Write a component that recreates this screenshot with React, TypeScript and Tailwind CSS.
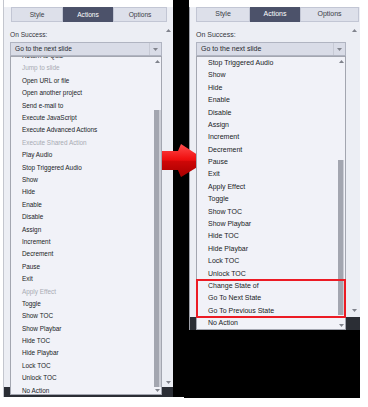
const leftItems: [string, boolean][] = [
  ['Return to Quiz', false],
  ['Jump to slide', true],
  ['Open URL or file', false],
  ['Open another project', false],
  ['Send e-mail to', false],
  ['Execute JavaScript', false],
  ['Execute Advanced Actions', false],
  ['Execute Shared Action', true],
  ['Play Audio', false],
  ['Stop Triggered Audio', false],
  ['Show', false],
  ['Hide', false],
  ['Enable', false],
  ['Disable', false],
  ['Assign', false],
  ['Increment', false],
  ['Decrement', false],
  ['Pause', false],
  ['Exit', false],
  ['Apply Effect', true],
  ['Toggle', false],
  ['Show TOC', false],
  ['Show Playbar', false],
  ['Hide TOC', false],
  ['Hide Playbar', false],
  ['Lock TOC', false],
  ['Unlock TOC', false],
  ['No Action', false],
]

const rightItems = [
  'Stop Triggered Audio',
  'Show',
  'Hide',
  'Enable',
  'Disable',
  'Assign',
  'Increment',
  'Decrement',
  'Pause',
  'Exit',
  'Apply Effect',
  'Toggle',
  'Show TOC',
  'Show Playbar',
  'Hide TOC',
  'Hide Playbar',
  'Lock TOC',
  'Unlock TOC',
  'Change State of',
  'Go To Next State',
  'Go To Previous State',
  'No Action',
]

function Tri({ up = false }: { up?: boolean }) {
  return (
    <svg width="5" height="3" viewBox="0 0 5 3" className="shrink-0">
      <path d={up ? 'M0 3 L2.5 0 L5 3 Z' : 'M0 0 L5 0 L2.5 3 Z'} fill="#80838c" />
    </svg>
  )
}

function Tabs({ widths, size }: { widths: number[]; size: string }) {
  const names = ['Style', 'Actions', 'Options']
  return (
    <div className="flex h-[15px]">
      {names.map((n, i) => (
        <div
          key={n}
          style={{ width: widths[i] }}
          className={
            i === 1
              ? `flex items-center justify-center bg-[#4c526a] text-white border border-[#4c526a] ${size}`
              : `flex items-center justify-center bg-[#dde0ea] text-[#3a3d46] border border-[#c2c6d4] ${size}`
          }
        >
          {n}
        </div>
      ))}
    </div>
  )
}

function Dropdown({ size }: { size: string }) {
  return (
    <div className={`mt-[2px] flex h-[14px] items-center justify-between border border-[#b0b4c1] bg-[#d9dce7] pl-[4px] pr-[3px] text-[#26282e] ${size}`}>
      <span>Go to the next slide</span>
      <div className="flex h-full items-center border-l border-[#c7cad5] pl-[3px]">
        <Tri />
      </div>
    </div>
  )
}

export default function App() {
  return (
    <div className="relative h-[407px] w-[368px] overflow-hidden bg-white font-['Liberation_Sans',Arial,sans-serif]">
      <div className="flex items-start">
        {/* left capture */}
        <div className="ml-[3px] flex h-[397px] w-[170px] flex-col border-l border-[#c3c6ce]">
          <div className="h-[7px] bg-white" />
          <div className="relative flex flex-1 flex-col bg-[#eceef4]">
            <div className="absolute inset-x-0 bottom-0 h-[10px] bg-[#2b2e35]" />
            <div className="ml-[7px]">
              <Tabs widths={[52, 50, 54]} size="text-[6.6px]" />
            </div>
            <div className="flex flex-1">
              <div className="relative z-10 ml-[6px] flex w-[152px] flex-col">
                <div className="mt-[8px] h-[10px] text-[6.6px] leading-[10px] text-[#33363d]">On Success:</div>
                <Dropdown size="text-[6.6px]" />
                <div className="flex h-[339px] border border-[#a3a6b0] bg-[#f1f2f8]">
                  <div className="flex-1 overflow-hidden">
                    <div className="mt-[-7.3px]">
                      {leftItems.map(([t, off]) => (
                        <div
                          key={t}
                          className={`flex h-[12.4px] items-center pl-[11px] text-[6.4px] ${off ? 'text-[#a8abb3]' : 'text-[#202226]'}`}
                        >
                          {t}
                        </div>
                      ))}
                    </div>
                  </div>
                  <div className="flex w-[8px] flex-col">
                    <div className="flex h-[8px] items-center justify-center">
                      <Tri up />
                    </div>
                    <div className="mt-[45px] ml-[1px] h-[277px] w-[7px] border-r-2 border-[#cbcdd5] bg-[#a3a6b0]" />
                    <div className="flex flex-1 items-center justify-center">
                      <Tri />
                    </div>
                  </div>
                </div>
              </div>
              <div className="flex flex-1 flex-col items-center justify-between pb-[13px] pt-[7px] pl-[2px]">
                <Tri up />
                <Tri />
              </div>
            </div>
          </div>
        </div>

        {/* black gap */}
        <div className="h-[397px] w-[16px] bg-black" />

        {/* right capture */}
        <div className="flex w-[171px] flex-col">
          <div className="h-[7px] bg-white" />
          <div className="relative flex h-[323px] flex-col border-l border-[#9ea1a9] bg-[#eceef4]">
            <div className="absolute inset-x-0 bottom-0 h-[13px] bg-[#2b2e35]" />
            <div className="ml-[6px]">
              <Tabs widths={[54, 50, 59]} size="text-[7px]" />
            </div>
            <div className="flex flex-1">
              <div className="relative z-10 ml-[6px] flex w-[150px] flex-col">
                <div className="mt-[8px] h-[10px] text-[7px] leading-[10px] text-[#33363d]">On Success:</div>
                <Dropdown size="text-[7px]" />
                <div className="relative flex h-[274px] border border-[#a3a6b0] bg-[#f1f2f8]">
                  <div className="flex-1 overflow-hidden">
                    {rightItems.map((t) => (
                      <div key={t} className="flex h-[12.4px] items-center pl-[11px] text-[7px] text-[#202226]">
                        {t}
                      </div>
                    ))}
                  </div>
                  <div className="flex w-[7px] flex-col">
                    <div className="flex h-[8px] items-center justify-center">
                      <Tri up />
                    </div>
                    <div className="mt-[95px] h-[155px] w-[6px] border-r border-[#cbcdd5] bg-[#a3a6b0]" />
                    <div className="flex flex-1 items-end justify-center pb-[2px]">
                      <Tri />
                    </div>
                  </div>
                  <div className="absolute -left-px -right-px top-[222px] h-[39px] border-2 border-[#ec1b24]" />
                </div>
              </div>
              <div className="flex flex-1 flex-col items-center justify-between pb-[18px] pt-[7px] pl-[2px]">
                <Tri up />
                <Tri />
              </div>
            </div>
          </div>
          <div className="-ml-[5px] h-[68px] w-[176px] bg-black" />
        </div>
      </div>

      {/* red transition arrow */}
      <svg className="absolute left-[146px] top-[140px]" width="64" height="40" viewBox="0 0 64 40">
        <defs>
          <linearGradient id="ar" x1="0" y1="0" x2="0" y2="1">
            <stop offset="0" stopColor="#ff4d4d" />
            <stop offset="0.45" stopColor="#f01010" />
            <stop offset="1" stopColor="#9c0000" />
          </linearGradient>
        </defs>
        <path d="M3 11 L32 11 L35 4 L61 21 L35 37 L32 30 L3 30 L13 20.5 Z" fill="url(#ar)" />
        <path d="M13 20.5 L61 21 L35 37 L32 30 L3 30 Z" fill="#b30000" opacity="0.45" />
      </svg>
    </div>
  )
}
